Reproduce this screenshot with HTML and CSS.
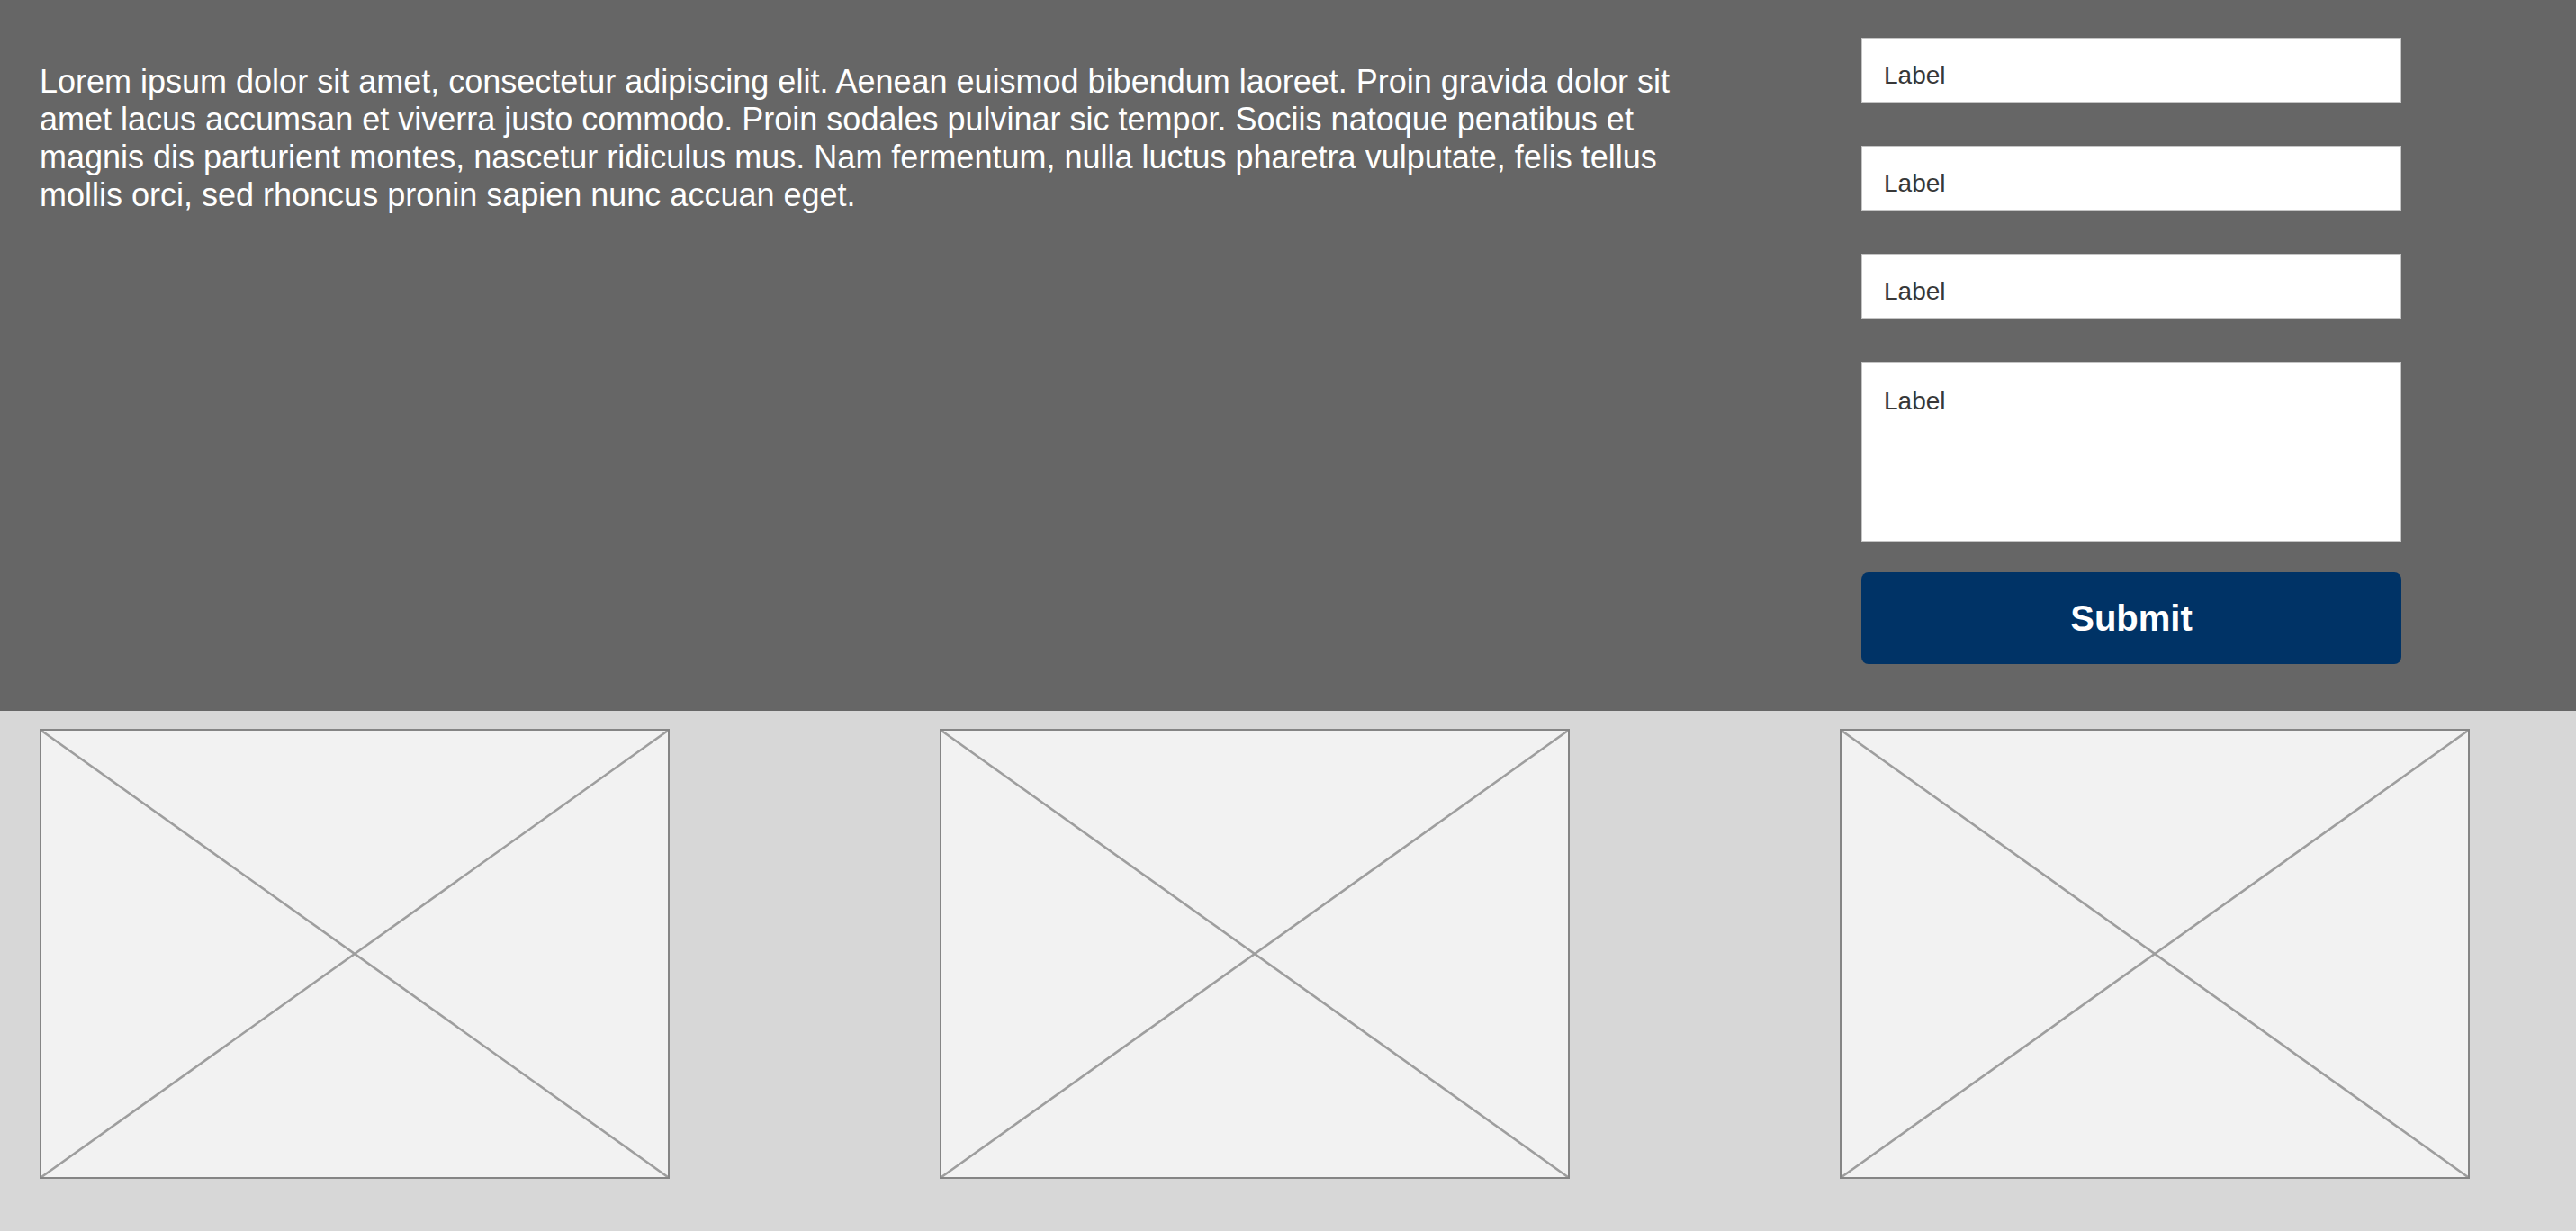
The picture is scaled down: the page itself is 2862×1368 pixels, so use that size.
FILE: index.html
```html
<!DOCTYPE html>
<html>
<head>
    <meta charset="UTF-8">
    <title>Contacto</title>
    <link rel="stylesheet" href="styles.css">
</head>
<body>
    <div class="top-section">
        <p class="intro">Lorem ipsum dolor sit amet, consectetur adipiscing elit. Aenean euismod bibendum laoreet. Proin gravida dolor sit amet lacus accumsan et viverra justo commodo. Proin sodales pulvinar sic tempor. Sociis natoque penatibus et magnis dis parturient montes, nascetur ridiculus mus. Nam fermentum, nulla luctus pharetra vulputate, felis tellus mollis orci, sed rhoncus pronin sapien nunc accuan eget.</p>
        <form class="contact-form">
            <input type="text" class="field" placeholder="Label">
            <input type="text" class="field" placeholder="Label">
            <input type="text" class="field" placeholder="Label">
            <textarea class="field field-area" placeholder="Label"></textarea>
            <button type="button" class="submit-button">Submit</button>
        </form>
    </div>

    <div class="bottom-section">
        <div class="placeholder">
            <svg viewBox="0 0 100 100" preserveAspectRatio="none">
                <line x1="0" y1="0" x2="100" y2="100" />
                <line x1="100" y1="0" x2="0" y2="100" />
            </svg>
        </div>
        <div class="placeholder">
            <svg viewBox="0 0 100 100" preserveAspectRatio="none">
                <line x1="0" y1="0" x2="100" y2="100" />
                <line x1="100" y1="0" x2="0" y2="100" />
            </svg>
        </div>
        <div class="placeholder">
            <svg viewBox="0 0 100 100" preserveAspectRatio="none">
                <line x1="0" y1="0" x2="100" y2="100" />
                <line x1="100" y1="0" x2="0" y2="100" />
            </svg>
        </div>
    </div>
</body>
</html>
```

FILE: styles.css
```css
body {
    margin: 0;
    font-family: "Liberation Sans", Arial, sans-serif;
    background-color: #d7d7d7;
    height: 1368px;
    overflow: hidden;
}

.top-section {
    display: grid;
    grid-template-columns: 1fr 750px;
    column-gap: 150px;
    padding: 42px 44px 52px;
    background-color: #666666;
}

.intro {
    margin: 28px 0 0;
    font-size: 36px;
    line-height: 42px;
    color: #fff;
}

.contact-form {
    display: flex;
    flex-direction: column;
    gap: 48px;
}

.field {
    box-sizing: border-box;
    width: 600px;
    height: 72px;
    margin: 0;
    padding: 12px 24px 0;
    border: 1px solid #c4c4c4;
    border-radius: 0;
    background-color: #fff;
    font-family: "Liberation Sans", Arial, sans-serif;
    font-size: 28px;
    color: #333;
    outline: none;
}

.field::placeholder {
    color: #383838;
    opacity: 1;
}

.field-area {
    height: 200px;
    padding-top: 27px;
    resize: none;
}

.submit-button {
    width: 600px;
    height: 102px;
    margin-top: -14px;
    border: none;
    border-radius: 8px;
    background-color: #003366;
    color: #fff;
    font-family: "Liberation Sans", Arial, sans-serif;
    font-size: 40px;
    font-weight: bold;
    cursor: pointer;
}

.bottom-section {
    display: flex;
    gap: 300px;
    padding: 20px 44px 0;
}

.placeholder {
    box-sizing: border-box;
    flex: none;
    width: 700px;
    height: 500px;
    border: 2px solid #858585;
    background-color: #f2f2f2;
}

.placeholder svg {
    display: block;
    width: 100%;
    height: 100%;
}

.placeholder line {
    stroke: #9e9e9e;
    stroke-width: 2.6;
    vector-effect: non-scaling-stroke;
}
```
